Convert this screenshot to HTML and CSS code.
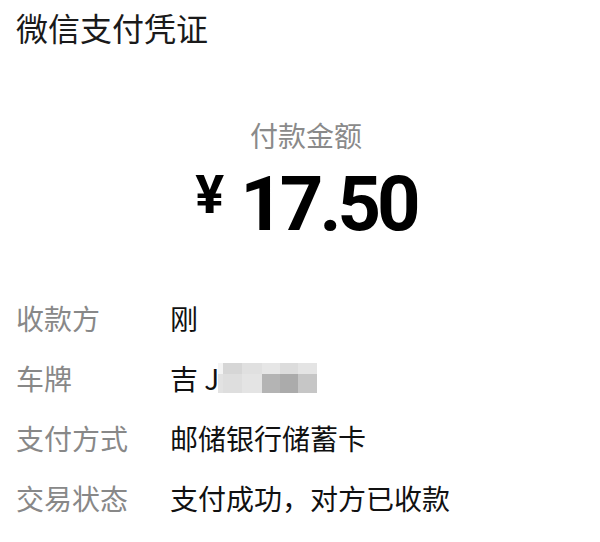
FILE: index.html
```html
<!DOCTYPE html>
<html lang="zh-CN">
<head>
  <meta charset="UTF-8" />
  <meta name="viewport" content="width=device-width, initial-scale=1.0"/>
  <title>微信支付凭证</title>
  <link rel="stylesheet" href="styles.css">
</head>
<body>
  <header class="title">微信支付凭证</header>

  <section class="amount-box">
    <p class="amount-label">付款金额</p>
    <p class="amount"><span class="currency">¥</span>17.50</p>
  </section>

  <section class="details">
    <div class="row">
      <span class="label">收款方</span>
      <span class="value">刚</span>
    </div>
    <div class="row">
      <span class="label">车牌</span>
      <span class="value">吉 J
        <span class="mosaic">
          <i style="background:#f4f4f4"></i><i style="background:#d6d6d6"></i><i style="background:#e0e0e0"></i><i style="background:#e6e6e6"></i><i style="background:#dcdcdc"></i><i style="background:#e4e4e4"></i>
          <i style="background:#e2e2e2"></i><i style="background:#dedede"></i><i style="background:#e4e4e4"></i><i style="background:#b4b4b4"></i><i style="background:#ababab"></i><i style="background:#c6c6c6"></i>
        </span>
      </span>
    </div>
    <div class="row">
      <span class="label">支付方式</span>
      <span class="value">邮储银行储蓄卡</span>
    </div>
    <div class="row">
      <span class="label">交易状态</span>
      <span class="value">支付成功，对方已收款</span>
    </div>
  </section>
</body>
</html>
```

FILE: styles.css
```css
body {
  margin: 0;
  background: #fff;
  color: #111;
  font-family: "Noto Sans CJK SC", "Noto Sans", sans-serif;
}

.title {
  padding: 11px 0 0 16px;
  font-size: 32px;
  line-height: 32px;
  color: #1a1a1a;
}

.amount-box {
  margin-top: 76px;
  padding-left: 12px;
  text-align: center;
}

.amount-label {
  margin: 0;
  font-size: 28px;
  line-height: 32px;
  color: #8a8a8a;
}

.amount {
  margin: 6px 0 0;
  font-family: Roboto, "Liberation Sans", sans-serif;
  font-weight: bold;
  font-size: 76px;
  line-height: 76px;
  color: #000;
  letter-spacing: -4px;
}

.currency {
  display: inline-block;
  margin-right: 16px;
  font-size: 54px;
  vertical-align: 17px;
  letter-spacing: 0;
}

.details {
  margin-top: 46px;
  padding-left: 16px;
}

.row {
  display: grid;
  grid-template-columns: 154px 1fr;
  height: 60px;
  align-items: center;
  font-size: 28px;
}

.label {
  color: #888;
}

.value {
  display: flex;
  align-items: center;
  color: #111;
}

.mosaic {
  display: grid;
  grid-template-columns: 5px 19px 20px 18px 18px 19px;
  grid-template-rows: 11px 19px;
  margin-left: -1px;
}

.mosaic i {
  display: block;
}
```
